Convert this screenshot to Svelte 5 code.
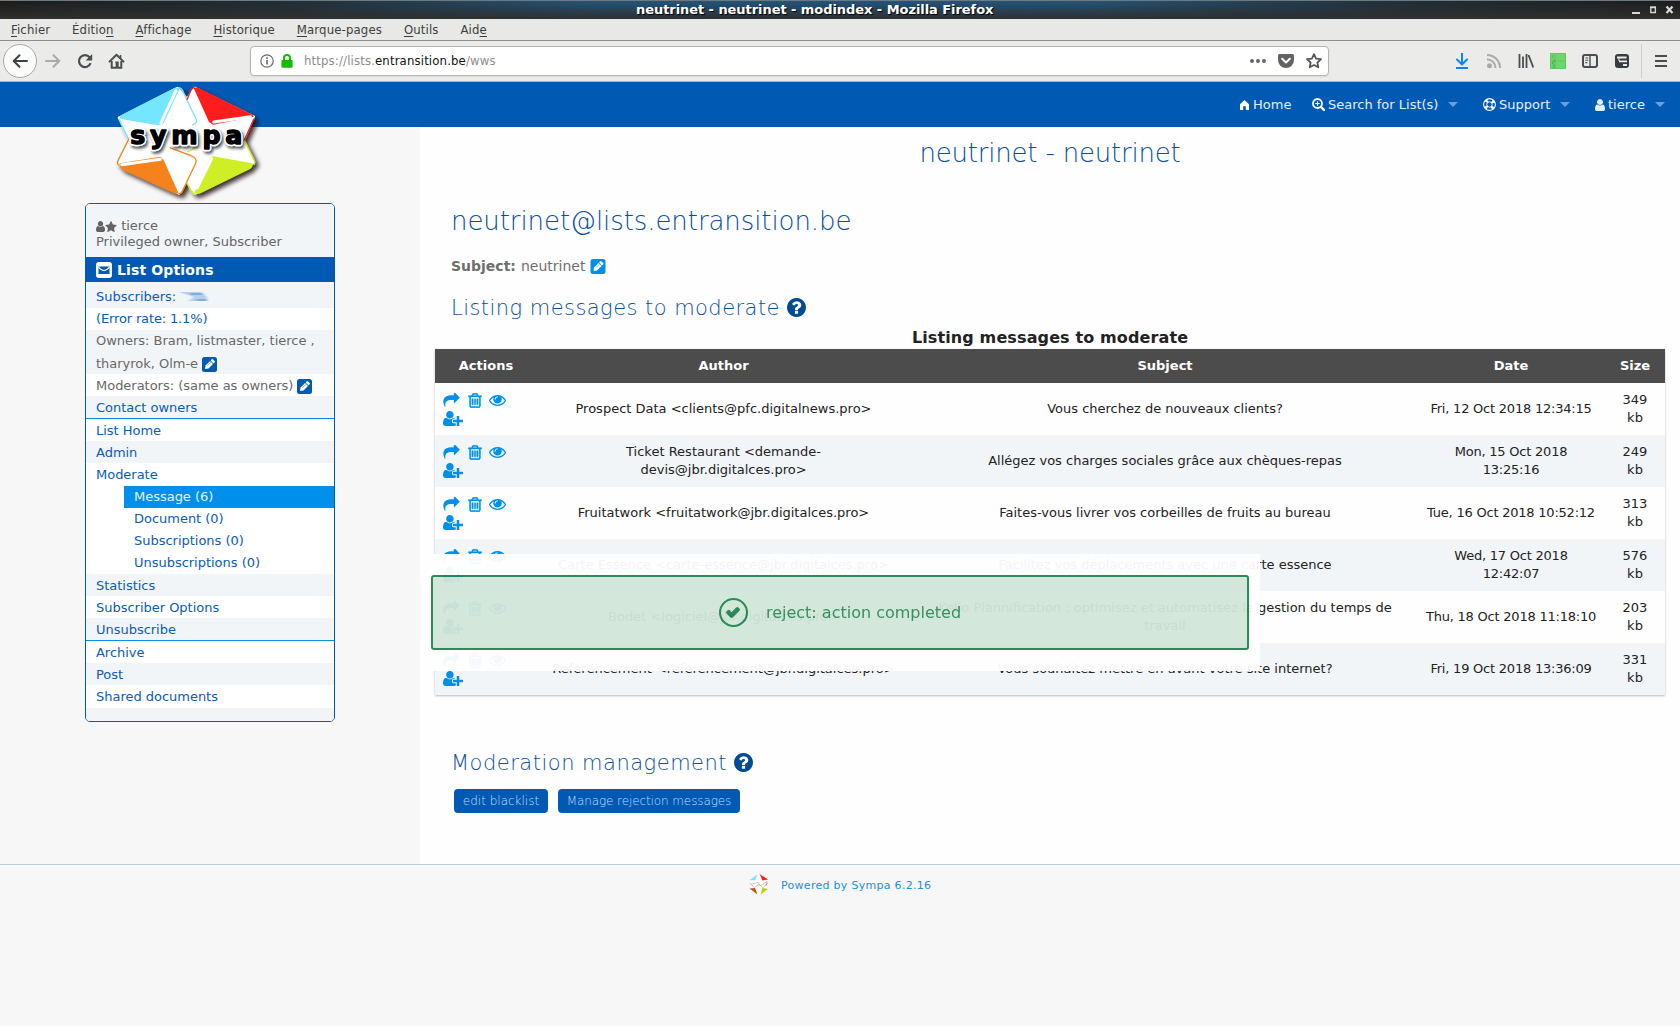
<script>
  const SHARE = 'M1792 640q0 26-19 45l-512 512q-19 19-45 19t-45-19-19-45v-256h-224q-98 0-175.5 6t-154 21.5-133 42.5-105.5 69.5-80 101-48.5 138.5-17.5 181q0 55 5 123 0 6 2.5 23.5t2.5 26.5q0 15-8.5 25t-23.5 10q-16 0-28-17-7-9-13-22t-13.5-30-10.5-24q-127-285-127-451 0-199 53-333 162-403 875-403h224v-256q0-26 19-45t45-19 45 19l512 512q19 19 19 45z';
  const TRASH = 'M704 736v576q0 14-9 23t-23 9h-64q-14 0-23-9t-9-23v-576q0-14 9-23t23-9h64q14 0 23 9t9 23zm256 0v576q0 14-9 23t-23 9h-64q-14 0-23-9t-9-23v-576q0-14 9-23t23-9h64q14 0 23 9t9 23zm256 0v576q0 14-9 23t-23 9h-64q-14 0-23-9t-9-23v-576q0-14 9-23t23-9h64q14 0 23 9t9 23zm128 724v-948h-896v948q0 22 7 40.5t14.5 27 10.5 8.5h832q3 0 10.5-8.5t14.5-27 7-40.5zm-672-1076h448l-48-117q-7-9-17-11h-317q-10 2-17 11zm928 32v64q0 14-9 23t-23 9h-96v948q0 83-47 143.5t-113 60.5h-832q-66 0-113-58.5t-47-141.5v-952h-96q-14 0-23-9t-9-23v-64q0-14 9-23t23-9h309l70-167q15-37 54-63t79-26h320q40 0 79 26t54 63l70 167h309q14 0 23 9t9 23z';
  const EYE = 'M1664 960q-152-236-381-353 61 104 61 225 0 185-131.5 316.5t-316.5 131.5-316.5-131.5-131.5-316.5q0-121 61-225-229 117-381 353 133 205 333.5 326.5t434.5 121.5 434.5-121.5 333.5-326.5zm-720-384q0-20-14-34t-34-14q-125 0-214.5 89.5t-89.5 214.5q0 20 14 34t34 14 34-14 14-34q0-86 61-147t147-61q20 0 34-14t14-34zm848 384q0 34-20 69-140 230-376.5 368.5t-499.5 138.5-499.5-139-376.5-368q-20-35-20-69t20-69q140-229 376.5-368t499.5-139 499.5 139 376.5 368q20 35 20 69z';
  const USER_PLUS = 'M704 896q-159 0-271.5-112.5t-112.5-271.5 112.5-271.5 271.5-112.5 271.5 112.5 112.5 271.5-112.5 271.5-271.5 112.5zm960 128h352q13 0 22.5 9.5t9.5 22.5v192q0 13-9.5 22.5t-22.5 9.5h-352v352q0 13-9.5 22.5t-22.5 9.5h-192q-13 0-22.5-9.5t-9.5-22.5v-352h-352q-13 0-22.5-9.5t-9.5-22.5v-192q0-13 9.5-22.5t22.5-9.5h352v-352q0-13 9.5-22.5t22.5-9.5h192q13 0 22.5 9.5t9.5 22.5v352zm-736 224q0 52 38 90t90 38h256v238q-68 50-171 50h-874q-121 0-194-69t-73-190q0-53 3.5-103.5t14-109 26.5-108.5 43-97.5 62-81 85.5-53.5 111.5-20q19 0 39 17 79 61 154.5 91.5t164.5 30.5 164.5-30.5 154.5-91.5q20-17 39-17 132 0 217 96h-223q-52 0-90 38t-38 90v192z';
  const QUESTION = 'M1024 1376v-192q0-14-9-23t-23-9h-192q-14 0-23 9t-9 23v192q0 14 9 23t23 9h192q14 0 23-9t9-23zm256-672q0-88-55.5-163t-138.5-116-170-41q-243 0-371 213-15 24 8 42l132 100q7 6 19 6 16 0 25-12 53-68 86-92 34-24 86-24 48 0 85.5 26t37.5 59q0 38-20 61t-68 45q-63 28-115.5 86.5t-52.5 125.5v36q0 14 9 23t23 9h192q14 0 23-9t9-23q0-19 21.5-49.5t54.5-49.5q32-18 49-28.5t46-35 44.5-48 28-60.5 12.5-81zm384 192q0 209-103 385.5t-279.5 279.5-385.5 103-385.5-103-279.5-279.5-103-385.5 103-385.5 279.5-279.5 385.5-103 385.5 103 279.5 279.5 103 385.5z';
  const USER = 'M1536 1399q0 109-62.5 187t-150.5 78h-854q-88 0-150.5-78t-62.5-187q0-85 8.5-160.5t31.5-152 58.5-131 94-89 134.5-34.5q131 128 313 128t313-128q76 0 134.5 34.5t94 89 58.5 131 31.5 152 8.5 160.5zm-256-887q0 159-112.5 271.5t-271.5 112.5-271.5-112.5-112.5-271.5 112.5-271.5 271.5-112.5 271.5 112.5 112.5 271.5z';
  const STAR = 'M1728 647q0 22-26 48l-363 354 86 500q1 7 1 20 0 21-10.5 35.5t-30.5 14.5q-19 0-40-12l-449-236-449 236q-22 12-40 12-21 0-31.5-14.5t-10.5-35.5q0-6 2-20l86-500-364-354q-25-27-25-48 0-37 56-46l502-73 225-455q19-41 49-41t49 41l225 455 502 73q56 9 56 46z';
  const CHECK = 'M1671 566q0 40-28 68l-724 724-136 136q-28 28-68 28t-68-28l-136-136-362-362q-28-28-28-68t28-68l136-136q28-28 68-28t68 28l294 295 656-657q28-28 68-28t68 28l136 136q28 28 28 68z';

  // [before, access key, after]
  const menus = [
    ['', 'F', 'ichier'], ['Éditio', 'n', ''], ['', 'A', 'ffichage'], ['', 'H', 'istorique'],
    ['', 'M', 'arque-pages'], ['', 'O', 'utils'], ['Aid', 'e', '']
  ];

  const rows = [
    { author: ['Prospect Data <clients@pfc.digitalnews.pro>'], subject: ['Vous cherchez de nouveaux clients?'], date: ['Fri, 12 Oct 2018 12:34:15'], size: '349' },
    { author: ['Ticket Restaurant <demande-', 'devis@jbr.digitalces.pro>'], subject: ['Allégez vos charges sociales grâce aux chèques-repas'], date: ['Mon, 15 Oct 2018', '13:25:16'], size: '249' },
    { author: ['Fruitatwork <fruitatwork@jbr.digitalces.pro>'], subject: ['Faites-vous livrer vos corbeilles de fruits au bureau'], date: ['Tue, 16 Oct 2018 10:52:12'], size: '313' },
    { author: ['Carte Essence <carte-essence@jbr.digitalces.pro>'], subject: ['Facilitez vos déplacements avec une carte essence'], date: ['Wed, 17 Oct 2018', '12:42:07'], size: '576' },
    { author: ['Bodet <logiciel@jbr.digitalces.pro>'], subject: ['Kelio Plannification : optimisez et automatisez la gestion du temps de', 'travail'], date: ['Thu, 18 Oct 2018 11:18:10'], size: '203' },
    { author: ['Referencement <referencement@jbr.digitalces.pro>'], subject: ['Vous souhaitez mettre en avant votre site internet?'], date: ['Fri, 19 Oct 2018 13:36:09'], size: '331' }
  ];
</script>

{#snippet fa(path, cls, box = '0 0 1792 1792')}
  <svg class={cls} viewBox={box}><path d={path} fill="currentColor" /></svg>
{/snippet}

{#snippet pencil(cls)}
  <svg class={cls} viewBox="0 0 15 15">
    <rect width="15" height="15" rx="2.5" fill="currentColor" />
    <g transform="rotate(-45 7.5 7.5)" fill="#fff">
      <path d="M1.2 7.5 4 5.4h6.4v4.2H4z" />
      <rect x="11" y="5.4" width="2.6" height="4.2" rx=".7" />
    </g>
    <path d="M5.4 8.8 9 5.2" stroke="currentColor" stroke-width=".5" />
  </svg>
{/snippet}

<div class="window">
  <div class="titlebar">
    <span class="wtitle">neutrinet - neutrinet - modindex - Mozilla Firefox</span>
    <svg class="wbtns" viewBox="0 0 44 12" fill="none" stroke="#d8d8d8">
      <path d="M1 9h8" stroke-width="2" />
      <path d="M19.8 3.5h4.6v5h-4.6z" stroke-width="1.3" /><path d="M19 3.2h6" stroke-width="1.6" />
      <path d="m35.5 2.5 6 6.5m0-6.5-6 6.5" stroke-width="2.2" />
    </svg>
  </div>

  <div class="menubar">
    {#each menus as [a, k, b]}<span>{a}<u>{k}</u>{b}</span>{/each}
  </div>

  <div class="toolbar">
    <span class="back">
      <svg viewBox="0 0 16 16" fill="none" stroke="#3d4145" stroke-width="2" stroke-linecap="round" stroke-linejoin="round"><path d="M15 8H2M7.5 2.2 1.7 8l5.8 5.8" /></svg>
    </span>
    <svg class="ic fwd" viewBox="0 0 16 16" fill="none" stroke="#a9aaab" stroke-width="2" stroke-linecap="round" stroke-linejoin="round"><path d="M1 8h13M8.5 2.2 14.3 8l-5.8 5.8" /></svg>
    <svg class="ic reload" viewBox="0 0 16 16" fill="none" stroke="#4a4d50" stroke-width="2.2"><path d="M13.6 10.2A6 6 0 1 1 12.6 4.2" /><path d="M15.2 1v6.6H8.6z" fill="#4a4d50" stroke="none" /></svg>
    <svg class="ic home" viewBox="0 0 16 16" fill="none" stroke="#4a4d50" stroke-width="2"><path d="M1 8.6 8 1.8l7 6.8" stroke-linecap="round" stroke-linejoin="round" /><path d="M3.2 8v6.8h9.6V8" /><path d="M8 9v6M6.8 9.2h2.6V15" stroke-width="1.6" /><path d="M12 2v3" stroke-width="1.6" /></svg>

    <div class="urlbar">
      <svg class="info" viewBox="0 0 14 14" fill="none" stroke="#6a6a6a"><circle cx="7" cy="7" r="6.2" stroke-width="1.2" /><path d="M7 6v4.6M7 3.2v1.7" stroke-width="1.6" /></svg>
      <svg class="lock" viewBox="0 0 12 14"><path d="M3 7V4a3 3 0 0 1 6 0v3" fill="none" stroke="#12bc00" stroke-width="2" /><rect x=".4" y="6" width="11.2" height="7.8" rx="1" fill="#12bc00" /></svg>
      <span class="url">https://lists.<b>entransition.be</b>/wws</span>
      <svg class="dots" viewBox="0 0 18 6" fill="#666"><circle cx="3" cy="3" r="2" /><circle cx="9" cy="3" r="2" /><circle cx="15" cy="3" r="2" /></svg>
      <svg class="pocket" viewBox="0 0 16 14"><path d="M1.5 0h13A1.5 1.5 0 0 1 16 1.5V6A8 8 0 0 1 0 6V1.500A1.500 1.500 0 0 1 1.500 0z" fill="#636363" /><path d="M4.200 4.800 8 8.400l3.800-3.600" fill="none" stroke="#fff" stroke-width="2" stroke-linecap="round" stroke-linejoin="round" /></svg>
      <svg class="fav" viewBox="0 0 16 16"><path d="m8 1.200 2.100 4.400 4.900.6-3.600 3.300.9 4.800L8 12l-4.300 2.300.9-4.800L1 6.200l4.900-.6z" fill="none" stroke="#555" stroke-width="1.800" stroke-linejoin="round" /></svg>
    </div>

    <div class="tools">
      <svg viewBox="0 0 16 16" fill="none" stroke="#0a84ff" stroke-width="2"><path d="M8 0v11M3 6.500l5 5 5-5" stroke-linejoin="round" stroke-linecap="round" /><path d="M2 15h12" /></svg>
      <svg viewBox="0 0 16 16" fill="none" stroke="#aaa" stroke-width="2"><circle cx="3.500" cy="12.700" r="2.500" fill="#aaa" stroke="none" /><path d="M1 6.500A8.200 8.200 0 0 1 9.500 15M1 2a13 13 0 0 1 13 13" /></svg>
      <svg viewBox="0 0 16 16" fill="none" stroke="#4a4d50" stroke-width="1.800"><path d="M1.500 1v14M5 3.500V15M8.500 1v14M10.500 2l4.800 12.500" /></svg>
      <svg viewBox="0 0 16 16"><path d="M0 0h16v16H0z" fill="#6fd66f" /><path d="M.5.5h15v15H.5zM5.500.5v15M.5 8h15" fill="none" stroke="#5cc55c" stroke-width=".8" /><path d="M3 2v3M2.500 7h2v2h-2v2h2M2.500 12.500h2v2h-2" fill="none" stroke="#4aa94a" stroke-width=".8" /></svg>
      <svg viewBox="0 0 16 16" fill="none" stroke="#4a4d50"><rect x="1" y="2" width="14" height="12" rx="2" stroke-width="2" /><path d="M8 2v12" stroke-width="1.400" /><path d="M3.300 5h3M3.300 7.300h3M3.300 9.600h2" stroke-width="1.100" /></svg>
      <svg viewBox="0 0 16 16"><rect x="1" y="1" width="14" height="14" rx="3" fill="#393c3e" /><g fill="#ececea"><path d="M3 3.600h9.600v2H3zM5 7.400h8v1.800H5zM9 11h4v2H9z" /><path d="M4.500 5h1v3h-1z" /></g></svg>
      <i class="sep"></i>
      <svg class="burger" viewBox="0 0 16 16" stroke="#4a4d50" stroke-width="2"><path d="M2 3h12M2 8h12M2 13h12" /></svg>
    </div>
  </div>

  <nav class="nav">
    <a class="n1"><svg class="nhome" viewBox="0 0 10 11"><path d="M5 0 10 4.600V11H6.500V7h-3v4H0V4.600z" fill="#fff" /></svg>Home</a>
    <a class="n2"><svg class="nico" viewBox="0 0 13 13" fill="none" stroke="#fff"><circle cx="5.500" cy="5.500" r="4.500" stroke-width="1.800" /><path d="m9 9 3 3" stroke-width="2.400" stroke-linecap="round" /><path d="M5.500 3.200v4.600M3.200 5.500h4.600" stroke-width="1.100" /></svg>Search for List(s)<i></i></a>
    <a class="n3"><svg class="nico" viewBox="0 0 13 13" fill="none" stroke="#fff"><circle cx="6.500" cy="6.500" r="4.400" stroke-width="3.400" stroke-dasharray="2.400 4.511" stroke-dashoffset="-2.255" /><circle cx="6.500" cy="6.500" r="5.900" stroke-width="1.100" /><circle cx="6.500" cy="6.500" r="2.700" stroke-width="1" /></svg>Support<i></i></a>
    <a class="n4">{@render fa(USER, 'nuser', '256 128 1280 1536')}tierce<i></i></a>
  </nav>

  <div class="body">
    <aside>
      <svg class="logo" viewBox="100 20 460 370">
        <defs>
          <filter id="sh" x="-20%" y="-20%" width="150%" height="150%"><feDropShadow dx="10" dy="10" stdDeviation="7" flood-color="#1c0c0c" flood-opacity=".85" /></filter>
          <filter id="ts" x="-20%" y="-20%" width="150%" height="160%"><feDropShadow dx="5" dy="7" stdDeviation="4" flood-color="#000" flood-opacity=".7" /></filter>
          <filter id="soft"><feGaussianBlur stdDeviation="2" /></filter>
        </defs>
        <g filter="url(#sh)" stroke-linejoin="round">
          <path d="M345 37 523 124 492 196 523 262 347 355 322 318 298 355 114 264 148 190 117 127 294 37 322 70z" fill="#fff" stroke="#fff" stroke-width="6" />
          <path d="M294 37q12-2 18 16l38 80q4 10-12 16" fill="none" stroke="#74e6ff" stroke-width="4" />
          <path d="m146 190-28-58" fill="none" stroke="#74e6ff" stroke-width="4" />
          <path d="M345 37q-10 0-14 14l-9 22M523 130l-30 66" fill="none" stroke="#ff1c1c" stroke-width="4" />
          <path d="m148 190-33 66q-4 8 2 14M270 217l66 25q18 8 12 22l-40 84q-4 8-12 8" fill="none" stroke="#f6821f" stroke-width="4" />
          <path d="m494 196 28 56q6 10 0 16M322 320l10 24q6 12 16 12M322 230l30-16" fill="none" stroke="#d0ee27" stroke-width="4" />
          <path d="M124 120 280 40q12-5 20 0L252 144l-18 6-114-20q-2-6 4-10z" fill="#74e6ff" />
          <path d="M342 38q8-4 20 2l152 76q8 4 8 8l-122 24-12-8z" fill="#ff1c1c" />
          <path d="m120 264 122-20 10 10 44 98q-4 6-16 0L130 284q-14-8-10-20z" fill="#f6821f" />
          <path d="M392 246q6-6 16-2l110 20q4 8-6 16l-150 74q-10 4-18-2z" fill="#d0ee27" />
          <g fill="none" stroke="#fff" stroke-width="9" stroke-linecap="round" filter="url(#soft)"><path d="M289 46 244 142M402 140l110-16M126 268l116-16M352 338l44-88" /></g>
        </g>
        <text x="152" y="207" textLength="336" lengthAdjust="spacing" filter="url(#ts)">sympa</text>
        <text x="152" y="207" textLength="336" lengthAdjust="spacing" class="lt" aria-hidden="true">sympa</text>
      </svg>

      <div class="card">
        <div class="who">
          <div>{@render fa(USER, 'wuser', '256 128 1280 1536')}{@render fa(STAR, 'wstar', '64 32 1664 1588')} tierce</div>
          <div>Privileged owner, Subscriber</div>
        </div>
        <div class="lohead">
          <svg viewBox="0 0 16 16"><rect width="16" height="16" rx="3" fill="#fff" /><path d="M2.500 4.500h11v7.500h-11z" fill="#005ab4" /><path d="M2.500 5q5.500 7 11 0" fill="none" stroke="#fff" stroke-width="1.200" /></svg>
          List Options
        </div>
        <div class="it alt first">Subscribers: <svg class="smudge" viewBox="0 0 32 12"><g filter="url(#sm)"><path d="M1 1h22l6 5v4H10l6-4z" fill="#b4d0eb" /><path d="M12 3h13M18 9h11" stroke="#6fa2d8" stroke-width="1.500" /></g><defs><filter id="sm"><feGaussianBlur stdDeviation="1.800 .7" /></filter></defs></svg></div>
        <div class="it err">(Error rate: 1.1%)</div>
        <div class="it alt grey">Owners: Bram, listmaster, tierce ,</div>
        <div class="it alt grey low">tharyrok, Olm-e {@render pencil('pen')}</div>
        <div class="it grey low">Moderators: (same as owners) {@render pencil('pen')}</div>
        <div class="it alt line low">Contact owners</div>
        <div class="it low">List Home</div>
        <div class="it alt low">Admin</div>
        <div class="it tall">Moderate</div>
        <div class="it sub on">Message (6)</div>
        <div class="it sub">Document (0)</div>
        <div class="it sub">Subscriptions (0)</div>
        <div class="it sub">Unsubscriptions (0)</div>
        <div class="it alt low">Statistics</div>
        <div class="it low">Subscriber Options</div>
        <div class="it alt line low">Unsubscribe</div>
        <div class="it low">Archive</div>
        <div class="it alt low">Post</div>
        <div class="it tall">Shared documents</div>
        <div class="tail alt"></div>
      </div>
    </aside>

    <main>
      <h1>neutrinet - neutrinet</h1>
      <h2>neutrinet@lists.entransition.be</h2>
      <p class="subj"><b>Subject:</b> neutrinet {@render pencil('pen2')}</p>
      <h3><span>Listing messages to moderate</span>{@render fa(QUESTION, 'q', '128 128 1536 1536')}</h3>

      <div class="caption">Listing messages to moderate</div>
      <div class="table">
        <div class="tr th"><span>Actions</span><span>Author</span><span>Subject</span><span>Date</span><span>Size</span></div>
        {#each rows as r}
          <div class="tr">
            <div class="acts">
              {@render fa(SHARE, 'a1', '0 128 1792 1536')}
              {@render fa(TRASH, 'a2', '162 98 1468 1596')}
              {@render fa(EYE, 'a3', '0 384 1792 1152')}
              {@render fa(USER_PLUS, 'a4', '0 128 2048 1536')}
            </div>
            <div>{#each r.author as l}<span>{l}</span>{/each}</div>
            <div>{#each r.subject as l}<span>{l}</span>{/each}</div>
            <div class="date">{#each r.date as l}<span>{l}</span>{/each}</div>
            <div class="size"><span>{r.size}</span><span>kb</span></div>
          </div>
        {/each}
      </div>

      <h3 class="mm"><span>Moderation management</span>{@render fa(QUESTION, 'q', '128 128 1536 1536')}</h3>
      <div class="btns"><span class="btn b1">edit blacklist</span><span class="btn b2">Manage rejection messages</span></div>
    </main>
  </div>

  <footer>
    <svg viewBox="0 0 20 21">
      <path d="M10 0 19 5 17.500 10.500 19 16 10 21 1 16 2.500 10.500 1 5z" fill="#fff" />
      <path d="M.5 6 8.500.5 6 6.500z" fill="#74e6ff" /><path d="M10.500 0 19 5.500 13.500 6.500z" fill="#ff1c1c" /><path d="M.5 14.500 6 14l2.500 6.500z" fill="#c05010" /><path d="m19 15-7.500 5.500 2-6.500z" fill="#b4d010" />
      <path d="m.8 9 4.700 4.500L10 10l4 4 5-5M2 10.500 9 8l2 4 6-4" fill="none" stroke="#d9a98c" stroke-width=".7" />
      <path d="m18 7-1 5" stroke="#ff7070" stroke-width=".7" />
    </svg>
    <span>Powered by Sympa 6.2.16</span>
  </footer>

  <div class="toast">
    <div class="box">
      <span class="ok">{@render fa(CHECK, 'ck', '21 234 1750 1388')}</span>
      <span>reject: action completed</span>
    </div>
  </div>
</div>

<style>
  :global(body) { background: #f7f7f7; overflow: hidden; }
  .window { position: relative; box-sizing: border-box; width: 1680px; height: 1026px; display: flex; flex-direction: column; overflow: hidden; background: #f7f7f7; font-family: 'DejaVu Sans', sans-serif; font-size: 13px; color: #0a5cb4; white-space: nowrap; }
  .window * { box-sizing: border-box; }
  svg { display: block; flex: none; }

  .titlebar { height: 19px; flex: none; display: flex; align-items: center; border-top: 1px solid #6f7a80; background: linear-gradient(to bottom, transparent, #2f2f2f), linear-gradient(to right, #1c1b18 0, #20303a 18%, #23557a 35%, #1f5580 50%, #23557a 65%, #20303a 83%, #1c1b18 100%); }
  .wtitle { margin-left: 636px; width: 960px; color: #fff; font-weight: bold; font-size: 13px; line-height: 18px; letter-spacing: -.06px; text-shadow: 1px 1px 1px #000; }
  .wbtns { width: 44px; height: 12px; margin-left: 35px; }

  .menubar { height: 22px; flex: none; border-bottom: 1px solid #8f8f8d; background: #e8e8e6; display: flex; gap: 21.900px; padding-left: 11px; font-family: 'DejaVu Sans Condensed', 'DejaVu Sans', sans-serif; font-stretch: condensed; color: #3b3e40; line-height: 21px; letter-spacing: .15px; }
  .menubar u { text-underline-offset: 2px; }

  .toolbar { height: 41px; flex: none; border-bottom: 1px solid #b5b4ae; background: #ebebe9; display: flex; align-items: center; }
  .back { width: 34px; height: 34px; margin-left: 3px; border-radius: 50%; border: 1px solid #a8a8a6; background: #fbfbfb; display: grid; place-items: center; }
  .back svg { width: 16px; height: 16px; }
  .ic { width: 16px; height: 16px; }
  .fwd { margin-left: 8px; }
  .reload { margin-left: 16px; }
  .home { margin-left: 15px; width: 17px; }
  .urlbar { width: 1079px; height: 30px; margin-left: 125px; border: 1px solid #b3b3b1; border-radius: 4px; background: #fff; display: flex; align-items: center; padding-left: 9px; box-shadow: 0 1px 2px #0001; }
  .info { width: 14px; height: 14px; }
  .lock { width: 12px; height: 14px; margin-left: 7px; }
  .url { margin: -1px 0 0 11px; width: 945px; font-family: 'DejaVu Sans Condensed', 'DejaVu Sans', sans-serif; font-stretch: condensed; color: #8c8c8c; letter-spacing: .15px; }
  .url b { font-weight: normal; color: #111; }
  .dots { width: 18px; height: 6px; }
  .pocket { width: 16px; height: 14px; margin-left: 11px; }
  .fav { width: 16px; height: 16px; margin-left: 12px; }
  .tools { display: flex; align-items: center; margin-left: 125px; gap: 16px; }
  .tools svg { width: 16px; height: 16px; }
  .sep { width: 1px; height: 34px; background: #cfcfcd; margin-left: -5px; }
  .tools .burger { margin-left: -5px; }

  .nav { height: 45px; flex: none; background: #005ab4; color: #e4eefa; display: flex; align-items: center; padding-left: 1240px; }
  .nav a { display: flex; align-items: center; height: 20px; }
  .nav i { border: 5px solid transparent; border-top-color: #6d9fd6; border-bottom: 0; margin-left: auto; }
  .nhome { width: 9px; height: 10px; margin-right: 4px; }
  .nico { width: 13px; height: 13px; margin-right: 3px; }
  .nuser { width: 10px; height: 12px; margin-right: 3px; }
  .n1 { width: 72px; }
  .n2 { width: 146px; margin-right: 25px; }
  .n3 { width: 87px; margin-right: 25px; }
  .n4 { width: 70px; }

  .body { height: 737px; flex: none; display: flex; }
  aside { width: 420px; padding-left: 85px; }
  .logo { width: 153.333px; height: 123.333px; margin: -45px 0 -2.333px 28.333px; position: relative; overflow: visible; }
  .logo text { font: bold 76px 'DejaVu Sans', sans-serif; fill: #000; stroke: #fff; stroke-width: 13; paint-order: stroke; stroke-linejoin: round; }
  .logo .lt { stroke: #000; stroke-width: 4; }
  .card { width: 250px; height: 519px; border: 1px solid #005ab4; border-radius: 5px; background: #fff; overflow: hidden; }
  .who { height: 53px; padding: 14px 10px 0; background: #f2f5f8; color: #646464; line-height: 16px; }
  .who div { display: flex; align-items: center; white-space: pre; }
  .wuser { width: 9px; height: 11px; }
  .wstar { width: 12px; height: 11px; }
  .lohead { height: 25px; background: #005ab4; color: #fff; font-weight: bold; font-size: 14px; display: flex; align-items: center; padding-left: 10px; gap: 5px; letter-spacing: .14px; }
  .lohead svg { width: 16px; height: 16px; }
  .it { height: 22px; line-height: 22px; padding-left: 10px; display: flex; align-items: center; letter-spacing: -.02px; }
  .low { padding-top: 2px; }
  .err { letter-spacing: -.14px; }
  .alt { background: #f2f5f8; }
  .first { height: 26px; padding-top: 4px; }
  .grey { color: #686868; }
  .line { height: 23px; border-bottom: 1px solid #0090ec; }
  .tall { height: 23px; padding-top: 1px; }
  .sub { margin-left: 38px; }
  .on { background: #0090ec; color: #e6f4ff; }
  .tail { height: 13px; }
  .smudge { width: 32px; height: 12px; margin-left: 2px; }
  .pen { width: 15px; height: 15px; color: #005ab4; margin-left: 4px; }

  main { width: 1260px; background: #fefefe; display: flex; flex-direction: column; }
  h1, h2, h3 { margin: 0; font-family: 'DejaVu Sans Light', 'DejaVu Sans', sans-serif; font-weight: 200; color: #0b50a0; }
  h1 { height: 52px; line-height: 52px; font-size: 26px; text-align: center; letter-spacing: -.2px; }
  h2 { margin: 16px 0 0 31px; height: 52px; line-height: 52px; font-size: 26px; letter-spacing: -.08px; }
  .subj { margin: 9px 0 0 31px; height: 20px; display: flex; align-items: center; gap: 5px; font-size: 14px; color: #6e6e6e; }
  .pen2 { width: 16px; height: 15px; color: #0090ec; }
  h3 { display: flex; align-items: center; height: 32px; margin: 16px 0 0 31px; font-size: 21px; letter-spacing: .45px; gap: 7px; }
  .q { width: 19px; height: 19px; color: #004b96; margin-top: -2px; }
  .caption { height: 24px; line-height: 26px; margin-top: 1px; text-align: center; font-weight: bold; font-size: 16px; letter-spacing: .12px; color: #222; }
  .table { margin-left: 15px; width: 1230px; color: #222; box-shadow: 0 1px 2px #0004; }
  .tr { display: grid; grid-template-columns: 101px 375px 508px 184px 62px; height: 52px; align-items: center; text-align: center; line-height: 18px; background: #fefefe; }
  .tr:nth-child(odd) { background: #f2f5f8; }
  .tr.th { height: 34px; background: #4c4c4c; color: #fff; font-weight: bold; }
  .tr span { display: block; }
  .th span:first-child { padding-left: 1px; }
  .th span:last-child, .size { padding-left: 2px; }
  .date { letter-spacing: -.22px; }
  .acts { display: grid; grid-template-columns: 25px 21px 30px; grid-template-rows: 18px 17px; padding-left: 8px; align-items: center; color: #0090ec; row-gap: 1px; }
  .a1 { width: 17px; height: 14px; }
  .a2 { width: 14px; height: 15px; stroke: currentColor; stroke-width: 55; }
  .a3 { width: 17px; height: 11px; }
  .a4 { width: 20px; height: 15px; }
  h3.mm { margin: 52px 0 0 31px; letter-spacing: .5px; }
  .btns { display: flex; gap: 10px; margin: 10px 0 0 34px; }
  .btn { height: 24px; line-height: 24px; border-radius: 4px; background: #005ab4; color: #c4def6; font-size: 12px; text-align: center; font-family: 'DejaVu Sans Light', 'DejaVu Sans', sans-serif; font-weight: 200; }
  .b1 { width: 94px; }
  .b2 { width: 182px; letter-spacing: -.1px; }

  footer { flex: 1; border-top: 1px solid #bccddc; display: flex; align-items: flex-start; padding: 9px 0 0 749px; color: #1492ea; font-size: 11px; line-height: 23px; gap: 12px; letter-spacing: .29px; }
  footer svg { width: 20px; height: 21px; }

  .toast { position: absolute; left: 420px; top: 554px; width: 840px; height: 117px; background: #fff; opacity: .95; padding: 21px 11px; }
  .box { height: 75px; border: 2px solid #218650; border-radius: 3px; background: #d2e6da; color: #2e8b57; display: flex; align-items: center; justify-content: center; gap: 18px; font-size: 16px; }
  .ok { width: 29px; height: 29px; border: 2px solid #218650; border-radius: 50%; display: grid; place-items: center; }
  .ck { width: 14px; height: 11px; stroke: currentColor; stroke-width: 200; color: #218650; }
</style>
